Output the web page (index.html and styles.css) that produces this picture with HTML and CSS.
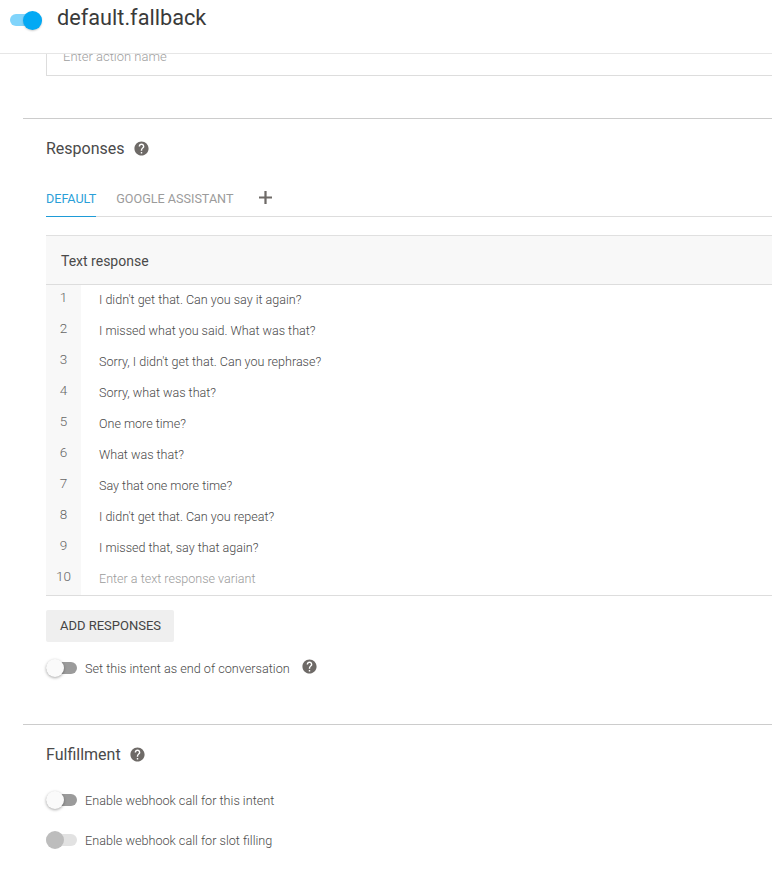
FILE: index.html
```html
<!DOCTYPE html>
<html lang="en">
<head>
<meta charset="utf-8">
<title>default.fallback</title>
<link rel="stylesheet" href="styles.css">
</head>
<body>
<svg class="defs" width="0" height="0" aria-hidden="true">
  <symbol id="help" viewBox="0 0 24 24"><path d="M12 2C6.48 2 2 6.48 2 12s4.48 10 10 10 10-4.48 10-10S17.52 2 12 2zm1 17h-2v-2h2v2zm2.07-7.75l-.9.92C13.45 12.9 13 13.5 13 15h-2v-.5c0-1.1.45-2.1 1.17-2.83l1.24-1.26c.37-.36.59-.86.59-1.41 0-1.1-.9-2-2-2s-2 .9-2 2H8c0-2.21 1.79-4 4-4s4 1.79 4 4c0 .88-.36 1.68-.93 2.25z"/></symbol>
</svg>
<header class="topbar">
  <span class="switch switch-on"></span>
  <h1 class="title">default.fallback</h1>
</header>
<main class="page">
  <div class="action-box"><span class="action-text">Enter action name</span></div>

  <section class="section section-responses">
    <h2 class="section-title">Responses <svg class="help help-title"><use href="#help"/></svg></h2>
    <nav class="tabs">
      <span class="tab tab-active">DEFAULT</span>
      <span class="tab">GOOGLE ASSISTANT</span>
      <svg class="tab-add" viewBox="0 0 14 14"><path d="M5.8 0h2.4v5.8H14v2.4H8.2V14H5.8V8.2H0V5.8h5.8z"/></svg>
    </nav>
    <div class="table">
      <div class="table-head">Text response</div>
      <div class="row"><span class="num">1</span><span class="cell">I didn't get that. Can you say it again?</span></div>
      <div class="row"><span class="num">2</span><span class="cell">I missed what you said. What was that?</span></div>
      <div class="row"><span class="num">3</span><span class="cell">Sorry, I didn't get that. Can you rephrase?</span></div>
      <div class="row"><span class="num">4</span><span class="cell">Sorry, what was that?</span></div>
      <div class="row"><span class="num">5</span><span class="cell">One more time?</span></div>
      <div class="row"><span class="num">6</span><span class="cell">What was that?</span></div>
      <div class="row"><span class="num">7</span><span class="cell">Say that one more time?</span></div>
      <div class="row"><span class="num">8</span><span class="cell">I didn't get that. Can you repeat?</span></div>
      <div class="row"><span class="num">9</span><span class="cell">I missed that, say that again?</span></div>
      <div class="row"><span class="num">10</span><span class="cell cell-placeholder">Enter a text response variant</span></div>
    </div>
    <button class="add-btn" type="button">ADD RESPONSES</button>
    <div class="toggle-row toggle-end">
      <span class="switch switch-off"></span>
      <span class="toggle-label">Set this intent as end of conversation</span>
      <svg class="help help-inline"><use href="#help"/></svg>
    </div>
  </section>

  <section class="section section-fulfillment">
    <h2 class="section-title">Fulfillment <svg class="help help-title"><use href="#help"/></svg></h2>
    <div class="toggle-row toggle-hook">
      <span class="switch switch-off"></span>
      <span class="toggle-label">Enable webhook call for this intent</span>
    </div>
    <div class="toggle-row toggle-slot">
      <span class="switch switch-disabled"></span>
      <span class="toggle-label">Enable webhook call for slot filling</span>
    </div>
  </section>
</main>
</body>
</html>
```

FILE: styles.css
```css
* { box-sizing: border-box; }
html, body { margin: 0; height: 100%; overflow: hidden; }
body { background: #fff; font-family: Roboto, "Liberation Sans", sans-serif; color: #4a4a4a; width: 772px; }
.defs { position: absolute; }

.topbar { height: 54px; border-bottom: 1px solid #e6e6e6; display: flex; align-items: flex-start; padding: 5px 0 0 10px; gap: 15px; }
.title { margin: 0; font-size: 21.7px; font-weight: 400; line-height: 26px; color: #3a3a3a; }

.switch { position: relative; display: block; width: 31px; height: 12px; border-radius: 6px; flex: none; }
.switch::after { content: ""; position: absolute; top: -3px; width: 18px; height: 18px; border-radius: 50%; }
.switch-on { background: #80d4fb; width: 32px; margin-top: 9px; }
.switch-on::after { right: 0; top: -3px; width: 19px; height: 19px; background: #03a9f4; box-shadow: 0 1px 2px rgba(0,0,0,.2); }
.switch-off { background: #9b9b9b; }
.switch-off::after { left: 0; background: #fafafa; box-shadow: 0 1px 3px rgba(0,0,0,.35); }
.switch-disabled { background: #e2e2e2; }
.switch-disabled::after { left: 0; background: #bdbdbd; }

.page { padding-left: 23px; }
.action-box { margin-left: 23px; height: 22px; border-left: 1px solid #ddd; border-bottom: 1px solid #ddd; padding-left: 16px; overflow: hidden; }
.action-text { display: block; font-size: 13px; font-weight: 300; line-height: 16px; margin-top: -5px; color: #9e9e9e; }

.section { border-top: 1px solid #ccc; padding-left: 23px; }
.section-responses { margin-top: 42px; padding-top: 20px; padding-bottom: 46px; }
.section-fulfillment { padding-top: 20px; }

.section-title { margin: 0; display: flex; align-items: center; gap: 6px; font-size: 16px; font-weight: 400; line-height: 20px; color: #4a4a4a; }
.help { fill: #6e6a67; display: block; flex: none; }
.help-title { width: 17px; height: 17px; margin-left: 2px; margin-top: -1px; }
.help-inline { width: 17px; height: 17px; margin-left: 3px; margin-top: -3px; }

.tabs { display: flex; align-items: flex-start; height: 38px; margin-top: 20px; border-bottom: 1px solid #ddd; font-size: 12.6px; line-height: 20px; }
.tab { height: 38px; padding-top: 10px; margin-right: 20px; color: #9b9b9b; }
.tab-active { color: #2a9fd8; border-bottom: 1px solid #1e9bd7; }
.tab-add { width: 13px; height: 13px; margin: 12px 0 0 6px; fill: #6e6a67; }

.table { margin-top: 18px; border-top: 1px solid #e0e0e0; border-bottom: 1px solid #ddd; }
.table-head { height: 49px; padding-left: 15px; background: #f8f8f8; border-bottom: 1px solid #ddd; font-size: 14px; line-height: 50px; color: #4a4a4a; }
.row { display: flex; height: 31px; font-size: 12.55px; font-weight: 300; }
.num { flex: none; width: 35px; background: #f8f8f8; text-align: center; line-height: 24px; font-size: 13.5px; color: #666; }
.cell { padding-left: 18px; line-height: 30px; color: #4a4a4a; }
.cell-placeholder { color: #9b9b9b; }

.add-btn { display: block; width: 128px; height: 32px; margin-top: 14px; border: 0; border-radius: 2px; background: #efefef; font: 400 13px/32px Roboto, "Liberation Sans", sans-serif; color: #444; padding: 0 0 0 1px; }

.toggle-row { display: flex; align-items: center; gap: 8px; height: 20px; }
.toggle-label { font-size: 12.65px; font-weight: 300; color: #4a4a4a; }
.toggle-end { margin-top: 16px; }
.toggle-hook { margin-top: 25px; }
.toggle-slot { margin-top: 20px; }
```
